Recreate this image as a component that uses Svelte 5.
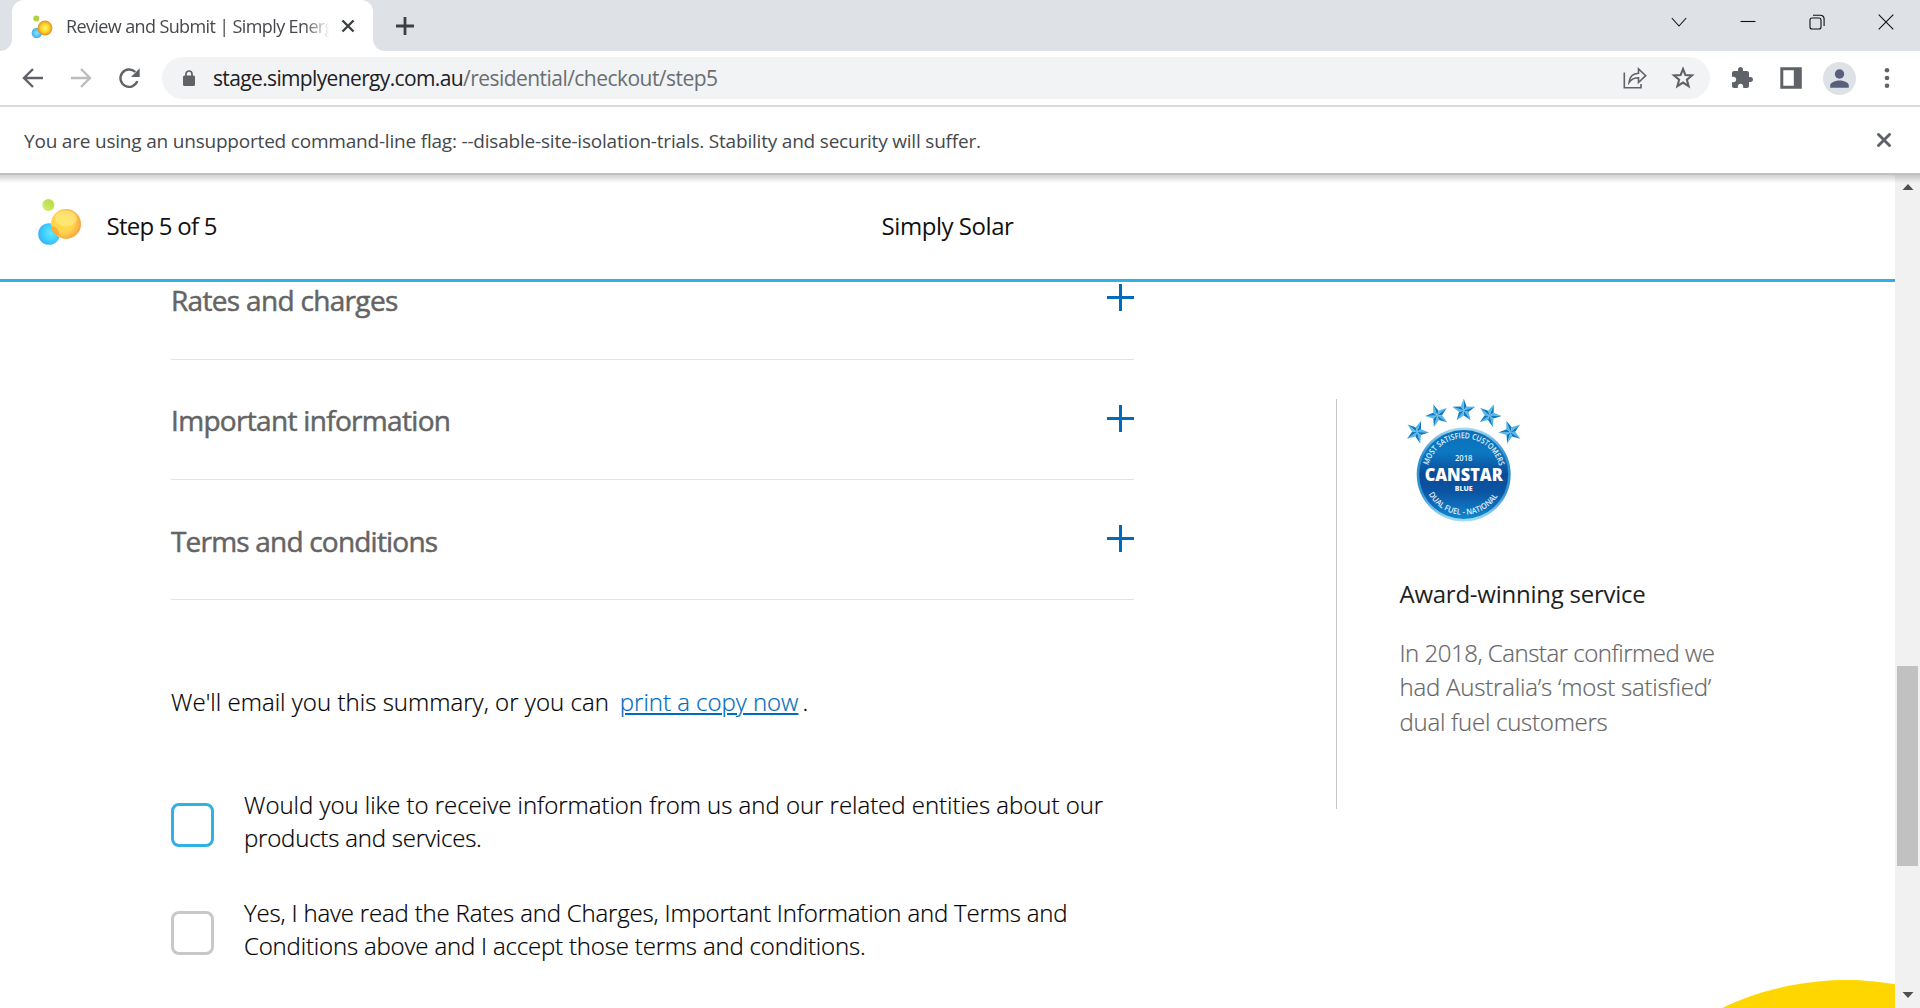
<script>
  const sections = [
    { title: 'Rates and charges', spacing: -0.68 },
    { title: 'Important information', spacing: -0.68 },
    { title: 'Terms and conditions', spacing: -0.8 }
  ];

  const consents = [
    {
      active: true,
      lines: [
        { text: 'Would you like to receive information from us and our related entities about our', spacing: -0.03 },
        { text: 'products and services.', spacing: -0.2 }
      ]
    },
    {
      active: false,
      lines: [
        { text: 'Yes, I have read the Rates and Charges, Important Information and Terms and', spacing: -0.18 },
        { text: 'Conditions above and I accept those terms and conditions.', spacing: -0.18 }
      ]
    }
  ];

  const award = [
    { text: 'In 2018, Canstar confirmed we', spacing: -0.48 },
    { text: 'had Australia’s ‘most satisfied’', spacing: -0.2 },
    { text: 'dual fuel customers', spacing: -0.25 }
  ];

  const stars = [
    { x: 17, y: 33, angle: -52 },
    { x: 37.2, y: 16.5, angle: -20 },
    { x: 63.7, y: 11.5, angle: 0 },
    { x: 89.6, y: 16.5, angle: 20 },
    { x: 110.4, y: 33, angle: 52 }
  ];

  // Ten facets of a star, alternating a light and a dark half for each point
  const facets = Array.from({ length: 10 }, (_, i) => {
    const at = (k) => {
      const r = k % 2 ? 4.9 : 12;
      const a = (k * Math.PI) / 5;
      return `${(Math.sin(a) * r).toFixed(2)},${(-Math.cos(a) * r).toFixed(2)}`;
    };
    return { points: `0,0 ${at(i)} ${at(i + 1)}`, dark: i % 2 === 0 };
  });
</script>

<div class="window">
  <div class="tabs">
    <div class="tab">
      <svg class="favicon" width="24" height="24" viewBox="0 0 24 24">
        <defs>
          <radialGradient id="fy"><stop offset="0" stop-color="#fff66a" /><stop offset=".55" stop-color="#fbd928" /><stop offset="1" stop-color="#e98a1c" /></radialGradient>
          <radialGradient id="fb"><stop offset="0" stop-color="#8fe0ff" /><stop offset="1" stop-color="#3fb0e8" /></radialGradient>
        </defs>
        <circle cx="6.3" cy="4.6" r="3" fill="#b3cf45" />
        <circle cx="6.8" cy="19" r="5.2" fill="url(#fb)" />
        <circle cx="15" cy="14" r="7.4" fill="url(#fy)" />
      </svg>
      <span class="title">Review and Submit | Simply Energy</span>
      <svg class="close" width="14" height="14" viewBox="0 0 14 14"><path d="M1.5 1.5l11 11M12.5 1.5l-11 11" stroke="#3c4043" stroke-width="2.4" /></svg>
    </div>
    <svg class="new" width="18" height="18" viewBox="0 0 18 18"><path d="M9 0v18M0 9h18" stroke="#3c4043" stroke-width="2.8" /></svg>
    <div class="controls">
      <svg width="16" height="16" viewBox="0 0 16 16"><path d="M.8 4L8 12 15.2 4" /></svg>
      <svg width="16" height="16" viewBox="0 0 16 16"><path d="M.5 7.5h15" /></svg>
      <svg width="16" height="16" viewBox="0 0 16 16"><rect x="1" y="4" width="11" height="11" rx="2" /><path d="M4 1.2h7.5a3.6 3.6 0 0 1 3.6 3.6V12" /></svg>
      <svg width="16" height="16" viewBox="0 0 16 16"><path d="M.7.7l14.6 14.6M15.3.7L.7 15.3" /></svg>
    </div>
  </div>

  <div class="toolbar">
    <svg class="nav" viewBox="0 0 24 24"><path d="M22 12H3.5M12 3l-9 9 9 9" fill="none" stroke="#5f6368" stroke-width="2.4" /></svg>
    <svg class="nav" viewBox="0 0 24 24"><path d="M2 12h18.5M12 3l9 9-9 9" fill="none" stroke="#babcbe" stroke-width="2.4" /></svg>
    <svg class="nav" viewBox="0 0 24 24"><path d="M20.3 15.2A8.7 8.7 0 1 1 18.3 6" fill="none" stroke="#5f6368" stroke-width="2.4" /><path d="M22.7 2.3v8.7H14z" fill="#5f6368" /></svg>
    <div class="address">
      <svg class="lock" width="12" height="16" viewBox="0 0 12 16"><rect y="5.5" width="12" height="10.5" rx="1.5" fill="#5f6368" /><path d="M3 6V4a3 3 0 0 1 6 0v2" fill="none" stroke="#5f6368" stroke-width="1.7" /></svg>
      <span class="url"><span class="host">stage.simplyenergy.com.au</span><span class="path">/residential/checkout/step5</span></span>
      <svg class="share" viewBox="0 0 24 24" fill="none" stroke="#5f6368" stroke-width="1.6"><path d="M1.3 6.5v15.2h16.7v-3.7" /><path d="M6 16.5C6.5 11 9.5 7.5 15.5 7.2V2.8l7.2 6.9-7.2 6.8v-4.7c-4 0-7 1.2-9.5 4.7z" /></svg>
      <svg class="star" viewBox="0 0 24 24"><path d="M12 3l2.4 6.1 6.6.4-5.1 4.2 1.7 6.4-5.6-3.6-5.6 3.6 1.7-6.4L3 9.5l6.6-.4z" fill="none" stroke="#5f6368" stroke-width="2.1" /></svg>
    </div>
    <div class="actions">
      <svg viewBox="0 0 24 24"><path fill="#5f6368" d="M20.5 11H19V7c0-1.1-.9-2-2-2h-4V3.5C13 2.12 11.88 1 10.5 1S8 2.12 8 3.5V5H4c-1.1 0-1.99.9-1.99 2v3.8H3.5c1.49 0 2.7 1.21 2.7 2.7s-1.21 2.7-2.7 2.7H2V20c0 1.1.9 2 2 2h3.8v-1.5c0-1.49 1.21-2.7 2.7-2.7 1.49 0 2.7 1.21 2.7 2.7V22H17c1.1 0 2-.9 2-2v-4h1.5c1.38 0 2.5-1.12 2.5-2.5S21.88 11 20.5 11z" /></svg>
      <svg viewBox="0 0 24 24"><path fill="#5f6368" fill-rule="evenodd" d="M1.3 1.3h21.5v21.5H1.3zM4.3 4.3v15.4h10.5V4.3z" /></svg>
      <svg class="avatar" viewBox="0 0 33 33"><circle cx="16.5" cy="16.5" r="16.5" fill="#dee1e6" /><circle cx="16.5" cy="12" r="4.7" fill="#56607a" /><path d="M7.2 25.7v-2.2c0-3.3 6-5 9.3-5s9.3 1.7 9.3 5v2.2z" fill="#56607a" /></svg>
      <svg viewBox="0 0 24 24" fill="#5f6368"><circle cx="12" cy="4.3" r="2.3" /><circle cx="12" cy="12" r="2.3" /><circle cx="12" cy="19.7" r="2.3" /></svg>
    </div>
  </div>

  <div class="infobar">
    <span>You are using an unsupported command-line flag: --disable-site-isolation-trials. Stability and security will suffer.</span>
    <svg width="14" height="14" viewBox="0 0 14 14"><path d="M1.5 1.5l11 11M12.5 1.5l-11 11" stroke="#5f6368" stroke-width="2.9" stroke-linecap="round" /></svg>
  </div>

  <div class="viewport">
    <div class="page">
      <header>
        <div class="step">
          <svg width="44" height="46" viewBox="0 0 44 46">
            <defs>
              <linearGradient id="lg" x1="1" y1="0" x2="0" y2="1"><stop offset="0" stop-color="#b2d834" /><stop offset="1" stop-color="#d3f27a" /></linearGradient>
              <radialGradient id="lb" cx=".6" cy=".45" r=".6"><stop offset="0" stop-color="#66e6ff" /><stop offset=".6" stop-color="#3fd0ff" /><stop offset="1" stop-color="#36b1f8" /></radialGradient>
              <radialGradient id="ly" cx=".4" cy=".45" r=".65"><stop offset="0" stop-color="#ffe04a" /><stop offset=".55" stop-color="#ffd24c" /><stop offset="1" stop-color="#f59b3c" /></radialGradient>
            </defs>
            <circle cx="10.3" cy="6.1" r="6" fill="url(#lg)" />
            <circle cx="11" cy="35" r="10.8" fill="url(#lb)" />
            <circle cx="28" cy="25" r="15" fill="url(#ly)" />
            <path d="M21.3 36.5c.4-4.5-2.3-8.6-8-10-.8 4.2 2 9.3 8 10z" fill="#f5902c" opacity=".5" />
            <ellipse cx="28" cy="19.5" rx="11" ry="8" fill="#fff3a0" opacity=".45" />
          </svg>
          <span>Step 5 of 5</span>
        </div>
        <span class="product">Simply Solar</span>
      </header>

      <main>
        <div class="content">
          {#each sections as s}
            <div class="section">
              <h2 style="letter-spacing: {s.spacing}px">{s.title}</h2>
              <svg class="plus" width="27" height="27" viewBox="0 0 27 27"><path d="M0 12h27v3H0zM12 0h3v27h-3z" fill="#006bbc" /></svg>
            </div>
          {/each}

          <p class="email"><span>We'll email you this summary, or you can</span><a href="#print">print a copy now</a><span>.</span></p>

          {#each consents as c}
            <div class="consent">
              <span class="box" class:active={c.active}></span>
              <p>
                {#each c.lines as l}<span style="letter-spacing: {l.spacing}px">{l.text}</span>{/each}
              </p>
            </div>
          {/each}
        </div>

        <aside>
          <svg class="badge" width="126" height="125" viewBox="0 0 126 125">
            <defs>
              <linearGradient id="disc" x1="0" y1="0" x2="0" y2="1">
                <stop offset="0" stop-color="#0c6fb8" /><stop offset=".25" stop-color="#0b78c2" /><stop offset=".5" stop-color="#0b4b98" /><stop offset=".7" stop-color="#0c55a3" /><stop offset="1" stop-color="#1187cf" />
              </linearGradient>
              <linearGradient id="rim" x1="0" y1="0" x2="0" y2="1">
                <stop offset="0" stop-color="#a8dcf2" /><stop offset=".3" stop-color="#2e8fd0" /><stop offset=".7" stop-color="#2f93d4" /><stop offset="1" stop-color="#a5e0f6" />
              </linearGradient>
              <path id="arc-top" d="M28.3 66.3A36.7 36.7 0 0 1 99.1 66.3" />
              <path id="arc-bottom" d="M28.6 95.3A40.3 40.3 0 0 0 98.8 95.3" />
            </defs>
            {#each stars as s}
              <g transform="translate({s.x} {s.y}) rotate({s.angle})">
                {#each facets as f}<polygon points={f.points} fill={f.dark ? '#1378bd' : '#52b9ea'} />{/each}
              </g>
            {/each}
            <circle cx="63.7" cy="75.5" r="47" fill="url(#rim)" />
            <circle cx="63.7" cy="75.5" r="44.5" fill="url(#disc)" />
            <g fill="#e4f2fb" font-size="8" font-weight="600">
              <text><textPath href="#arc-top" textLength="96" lengthAdjust="spacingAndGlyphs">MOST SATISFIED CUSTOMERS</textPath></text>
              <text><textPath href="#arc-bottom" textLength="83" lengthAdjust="spacingAndGlyphs">DUAL FUEL - NATIONAL</textPath></text>
              <text x="63.7" y="61.7" text-anchor="middle" font-size="8.5" textLength="17.5" lengthAdjust="spacingAndGlyphs">2018</text>
              <text x="63.7" y="92.2" text-anchor="middle" font-size="7.5" font-weight="800" textLength="18" lengthAdjust="spacingAndGlyphs">BLUE</text>
            </g>
            <text class="brand" x="63.7" y="82" text-anchor="middle" textLength="78" lengthAdjust="spacingAndGlyphs">CANSTAR</text>
          </svg>
          <h3>Award-winning service</h3>
          <p>
            {#each award as l}<span style="letter-spacing: {l.spacing}px">{l.text}</span>{/each}
          </p>
        </aside>
        <div class="bubble"></div>
      </main>
    </div>

    <div class="scrollbar">
      <svg width="12" height="6" viewBox="0 0 12 6"><path d="M6 0l5.5 6H.5z" fill="#505050" /></svg>
      <div class="thumb"></div>
      <svg width="12" height="6" viewBox="0 0 12 6"><path d="M6 6L.5 0h11z" fill="#505050" /></svg>
    </div>
    <div class="shade"></div>
  </div>
</div>

<style>
  :global(body) { margin: 0; background: #fff; }
  svg { display: block; flex: none; }
  h2, h3, p { margin: 0; font-weight: 400; }

  .window {
    width: 1920px;
    height: 1008px;
    overflow: hidden;
    display: flex;
    flex-direction: column;
    font-family: 'Open Sans', 'Noto Sans', sans-serif;
    white-space: nowrap;
  }

  /* Tab strip */
  .tabs {
    flex: none;
    height: 51px;
    box-sizing: border-box;
    padding-left: 12px;
    display: flex;
    background: #dee1e6;
  }
  .tab {
    position: relative;
    width: 361px;
    box-sizing: border-box;
    padding: 0 18px;
    display: flex;
    align-items: center;
    background: #fff;
    border-radius: 12px 12px 0 0;
  }
  .tab::before, .tab::after {
    content: '';
    position: absolute;
    bottom: 0;
    width: 12px;
    height: 12px;
  }
  .tab::before { left: -12px; background: radial-gradient(circle at 0 0, transparent 11.5px, #fff 12.5px); }
  .tab::after { right: -12px; background: radial-gradient(circle at 100% 0, transparent 11.5px, #fff 12.5px); }
  .favicon { margin-top: 1px; }
  .title {
    width: 264px;
    margin-left: 12px;
    overflow: hidden;
    font-size: 18px;
    line-height: 30px;
    letter-spacing: -0.62px;
    color: #45484c;
    -webkit-mask-image: linear-gradient(90deg, #000 238px, transparent 264px);
    mask-image: linear-gradient(90deg, #000 238px, transparent 264px);
  }
  .close { margin-left: 12px; }
  .new { margin: 17px 0 0 23px; }
  .controls {
    margin: 14px 26px 0 auto;
    display: flex;
    gap: 53px;
    fill: none;
    stroke: #111;
    stroke-width: 1.1;
  }

  /* Toolbar */
  .toolbar {
    flex: none;
    height: 56px;
    box-sizing: border-box;
    padding-left: 21px;
    border-bottom: 2px solid #d9dbdc;
    display: flex;
    align-items: center;
  }
  .nav { width: 24px; height: 24px; margin-right: 24px; }
  .address {
    flex: none;
    width: 1548px;
    height: 42px;
    margin-left: -3px;
    box-sizing: border-box;
    padding: 0 15px 0 21px;
    border-radius: 21px;
    background: #f1f3f4;
    display: flex;
    align-items: center;
  }
  .url { margin-left: 18px; font-size: 21px; line-height: 30px; }
  .host { color: #202124; letter-spacing: -0.64px; }
  .path { color: #6a6e73; letter-spacing: -0.54px; }
  .share { width: 24px; height: 24px; margin-left: auto; }
  .star { width: 24px; height: 24px; margin-left: 24px; }
  .actions { display: flex; align-items: center; margin-left: 20px; }
  .actions svg { width: 24px; height: 24px; margin-right: 25px; }
  .actions .avatar { width: 33px; height: 33px; margin: 0 19px 0 -5px; }
  .actions svg:last-child { margin-right: 0; }

  /* Infobar */
  .infobar {
    flex: none;
    height: 68px;
    box-sizing: border-box;
    padding: 0 29px 0 24px;
    border-bottom: 2px solid #bfc2c1;
    display: flex;
    align-items: center;
    justify-content: space-between;
    font-size: 19px;
    letter-spacing: -0.2px;
    color: #45484c;
  }
  .infobar span { padding-top: 2px; }

  /* Page */
  .viewport { position: relative; flex: 1; min-height: 0; display: flex; }
  .shade {
    position: absolute;
    top: 0;
    left: 0;
    width: 100%;
    height: 8px;
    background: linear-gradient(rgba(0, 0, 0, 0.18), rgba(0, 0, 0, 0));
  }
  .page { width: 1895px; display: flex; flex-direction: column; overflow: hidden; }
  header {
    flex: none;
    height: 107px;
    box-sizing: border-box;
    padding: 0 38px 4px;
    border-bottom: 3px solid #30b1e1;
    display: grid;
    grid-template-columns: 1fr auto 1fr;
    align-items: center;
    font-size: 24px;
    line-height: 34px;
    color: #111;
  }
  .step { display: flex; align-items: center; gap: 24.5px; letter-spacing: -0.75px; }
  .step svg { margin-top: -6px; }
  .step span, .product { padding-top: 2px; }
  .product { letter-spacing: -0.45px; }

  main { position: relative; flex: 1; min-height: 0; overflow: hidden; display: flex; padding-left: 171px; }
  .content { width: 963px; flex: none; margin-top: -42px; }
  .section {
    height: 120px;
    box-sizing: border-box;
    padding-top: 40px;
    border-bottom: 1px solid #e3e3e3;
    display: flex;
    justify-content: space-between;
    align-items: flex-start;
  }
  .section h2 {
    font-size: 28px;
    line-height: 40px;
    color: #646464;
    -webkit-text-stroke: 0.5px #646464;
  }
  .section:nth-child(3) h2 { line-height: 42px; }
  .plus { margin-top: 5px; }
  .section:first-child .plus { margin-top: 4px; }

  .email {
    padding-top: 85px;
    margin-bottom: 69px;
    display: flex;
    font-size: 24px;
    line-height: 34px;
    font-weight: 300;
    letter-spacing: 0.03px;
    color: #000;
    -webkit-text-stroke: 0.2px;
  }
  .email a {
    margin: 0 4px 0 11px;
    letter-spacing: -0.03px;
    color: #006bbc;
    text-decoration-thickness: 2px;
    text-underline-offset: 2px;
  }
  .consent { display: flex; height: 66px; margin-bottom: 42px; }
  .box {
    flex: none;
    width: 43px;
    height: 44px;
    box-sizing: border-box;
    margin: 15px 30px 0 0;
    border: 3px solid #c8c8c8;
    border-radius: 8px;
  }
  .box.active { border-color: #30b1e1; }
  .consent p { font-size: 24px; line-height: 33px; font-weight: 300; color: #000; -webkit-text-stroke: 0.2px; }
  .consent p span, aside p span { display: block; }

  aside {
    width: 400px;
    height: 410px;
    box-sizing: border-box;
    margin: 117px 0 0 202px;
    padding-left: 62.5px;
    border-left: 1px solid #c8c8c8;
  }
  .brand { font-size: 18px; font-weight: 800; fill: #fff; }
  aside h3 { margin-top: 53px; font-size: 24px; line-height: 34px; letter-spacing: -0.25px; color: #1e1e1e; }
  aside p {
    margin-top: 25px;
    font-size: 24px;
    line-height: 34.3px;
    font-weight: 300;
    color: #666;
    -webkit-text-stroke: 0.2px;
  }

  .bubble {
    position: absolute;
    left: 1559px;
    top: 698px;
    width: 574px;
    height: 574px;
    border-radius: 50%;
    background: #ffd600;
  }

  /* Scrollbar */
  .scrollbar {
    width: 25px;
    box-sizing: border-box;
    padding: 9px 0 10px;
    display: flex;
    flex-direction: column;
    align-items: center;
    background: #f1f1f1;
  }
  .thumb { width: 21px; height: 200px; margin: 476px 0 auto; background: #c1c1c1; }
</style>
